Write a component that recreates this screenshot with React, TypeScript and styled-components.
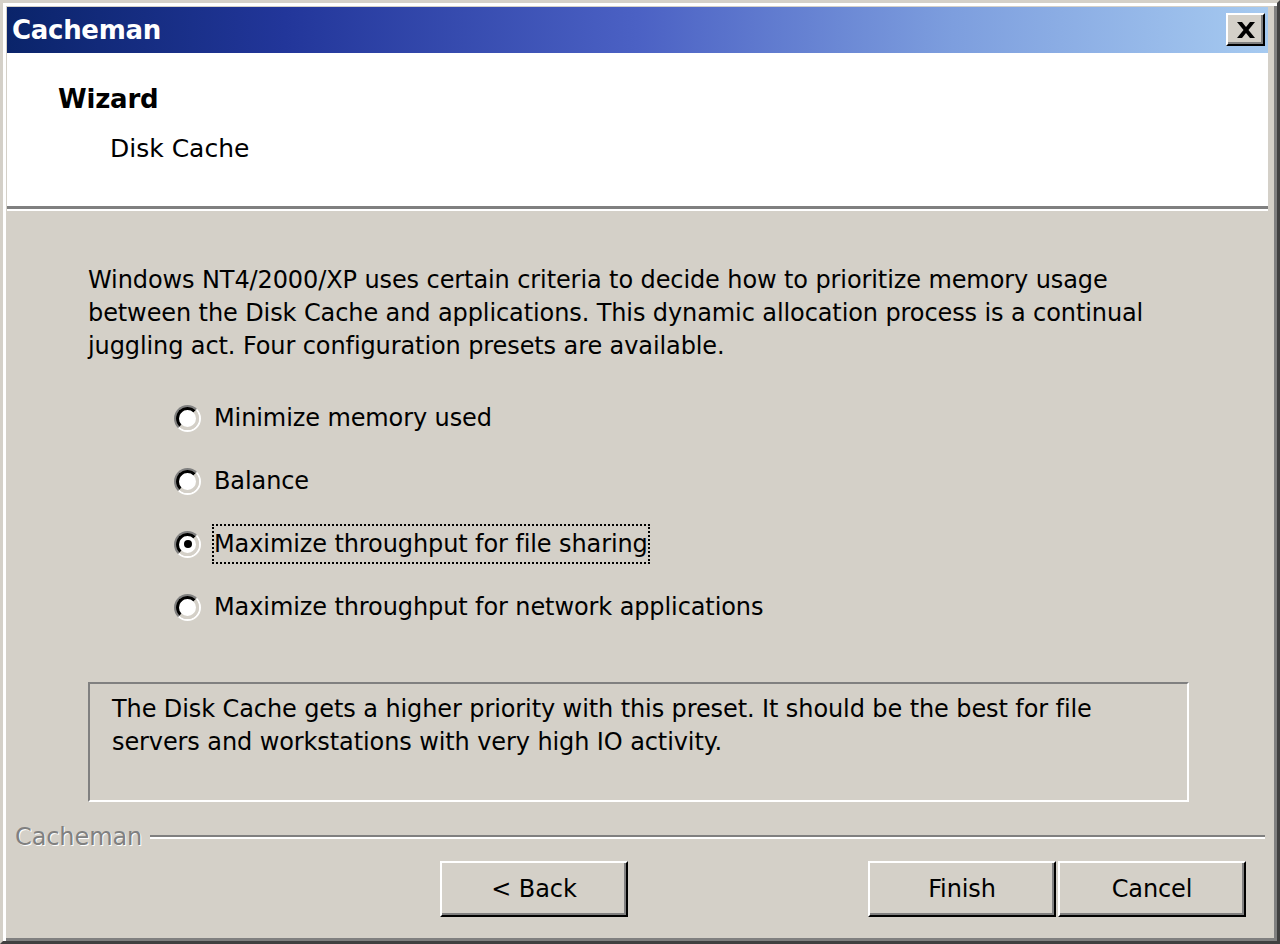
import React from "react";
import styled, { createGlobalStyle } from "styled-components";

const Global = createGlobalStyle`
  html, body { margin: 0; padding: 0; background: #d4d0c8; }
  body { font-family: "DejaVu Sans", "Liberation Sans", sans-serif; color: #000; }
  #root { width: 1280px; height: 944px; overflow: hidden; }
`;

const Window = styled.div`
  box-sizing: border-box;
  width: 1280px;
  height: 944px;
  background: #d4d0c8;
  border: 3px solid;
  border-color: #d4d0c8 #404040 #404040 #d4d0c8;
  box-shadow: inset 3px 3px 0 #ffffff, inset -3px -3px 0 #808080;
  padding: 4px 9px 4px 4px;
  display: flex;
  flex-direction: column;
`;

const TitleBar = styled.div`
  height: 46px;
  flex: none;
  background: linear-gradient(
    to right,
    #0a246a 0%,
    #22369a 22%,
    #4b61c4 50%,
    #7d9ede 75%,
    #a6caf0 100%
  );
  display: flex;
  align-items: center;
  justify-content: space-between;
  padding: 0 3px 0 5px;
`;

const TitleText = styled.span`
  color: #fff;
  font-weight: bold;
  font-size: 26px;
  letter-spacing: -0.3px;
`;

const CloseButton = styled.div`
  box-sizing: border-box;
  width: 39px;
  height: 33px;
  background: #d4d0c8;
  border: 2px solid;
  border-color: #ffffff #000000 #000000 #ffffff;
  box-shadow: inset -2px -2px 0 #808080;
  display: flex;
  align-items: center;
  justify-content: center;
  margin-top: -1px;
`;

const Header = styled.div`
  height: 153px;
  flex: none;
  background: #fff;
  box-sizing: border-box;
  padding: 31px 0 0 51px;
`;

const HeaderTitle = styled.div`
  font-weight: bold;
  font-size: 26px;
  line-height: 30px;
  letter-spacing: -0.2px;
`;

const HeaderSub = styled.div`
  font-size: 25px;
  line-height: 30px;
  margin: 20px 0 0 52px;
`;

const Separator = styled.div`
  height: 3px;
  flex: none;
  background: #808080;
  border-bottom: 2px solid #ffffff;
`;

const Body = styled.div`
  flex: 1;
  display: flex;
  flex-direction: column;
  letter-spacing: -0.1px;
`;

const Paragraph = styled.p`
  margin: 53px 0 0 81px;
  font-size: 24px;
  line-height: 33px;
  white-space: nowrap;
`;

const RadioList = styled.div`
  margin: 35px 0 0 167px;
  display: flex;
  flex-direction: column;
  gap: 23px;
`;

const RadioRow = styled.div`
  height: 40px;
  display: flex;
  align-items: center;
  gap: 11px;
`;

const RadioOuter = styled.span`
  box-sizing: border-box;
  width: 27px;
  height: 27px;
  border-radius: 50%;
  border: 2px solid;
  border-color: #808080 #ffffff #ffffff #808080;
  display: flex;
  align-items: center;
  justify-content: center;
  flex: none;
`;

const RadioInner = styled.span`
  box-sizing: border-box;
  width: 23px;
  height: 23px;
  border-radius: 50%;
  border: 3px solid;
  border-color: #000000 #d4d0c8 #d4d0c8 #000000;
  background: #fff;
  display: flex;
  align-items: center;
  justify-content: center;
`;

const Dot = styled.span`
  width: 8px;
  height: 8px;
  border-radius: 50%;
  background: #000;
`;

const RadioLabel = styled.span<{ $focused?: boolean }>`
  box-sizing: border-box;
  height: 40px;
  display: flex;
  align-items: center;
  padding: 0;
  font-size: 24px;
  border: 2px ${(p) => (p.$focused ? "dotted #000" : "solid transparent")};
  white-space: nowrap;
`;

const InfoBox = styled.div`
  box-sizing: border-box;
  margin: 55px 0 0 81px;
  width: 1101px;
  height: 120px;
  border: 2px solid;
  border-color: #808080 #ffffff #ffffff #808080;
  padding: 9px 22px;
  font-size: 24px;
  line-height: 33px;
  white-space: nowrap;
`;

const FooterRow = styled.div`
  margin-top: 23px;
  height: 24px;
  display: flex;
  align-items: center;
  gap: 8px;
  padding: 0 3px 0 8px;
`;

const FooterLabel = styled.span`
  font-size: 24px;
  color: #808080;
  text-shadow: 1px 1px 0 #ffffff;
  white-space: nowrap;
`;

const EtchedLine = styled.div`
  flex: 1;
  height: 2px;
  background: #808080;
  border-bottom: 2px solid #ffffff;
`;

const ButtonRow = styled.div`
  margin-top: 12px;
  display: flex;
  justify-content: flex-end;
  padding-right: 22px;
`;

const Button = styled.div<{ $gapAfter?: number }>`
  box-sizing: border-box;
  width: 188px;
  height: 56px;
  background: #d4d0c8;
  border: 2px solid;
  border-color: #ffffff #000000 #000000 #ffffff;
  box-shadow: inset -2px -2px 0 #808080;
  display: flex;
  align-items: center;
  justify-content: center;
  font-size: 24px;
  margin-right: ${(p) => p.$gapAfter ?? 0}px;
`;

const CloseIcon = () => (
  <svg width="22" height="18" viewBox="0 0 22 18">
    <path
      d="M2 1 L7 1 L11 6 L15 1 L20 1 L13.5 9 L20 17 L15 17 L11 12 L7 17 L2 17 L8.5 9 Z"
      fill="#000"
    />
  </svg>
);

const options = [
  "Minimize memory used",
  "Balance",
  "Maximize throughput for file sharing",
  "Maximize throughput for network applications",
];

export default function App() {
  const selected = 2;
  return (
    <>
      <Global />
      <Window>
        <TitleBar>
          <TitleText>Cacheman</TitleText>
          <CloseButton>
            <CloseIcon />
          </CloseButton>
        </TitleBar>
        <Header>
          <HeaderTitle>Wizard</HeaderTitle>
          <HeaderSub>Disk Cache</HeaderSub>
        </Header>
        <Separator />
        <Body>
          <Paragraph>
            Windows NT4/2000/XP uses certain criteria to decide how to prioritize memory usage
            <br />
            between the Disk Cache and applications. This dynamic allocation process is a continual
            <br />
            juggling act. Four configuration presets are available.
          </Paragraph>
          <RadioList>
            {options.map((o, i) => (
              <RadioRow key={o}>
                <RadioOuter>
                  <RadioInner>{i === selected && <Dot />}</RadioInner>
                </RadioOuter>
                <RadioLabel $focused={i === selected}>{o}</RadioLabel>
              </RadioRow>
            ))}
          </RadioList>
          <InfoBox>
            The Disk Cache gets a higher priority with this preset. It should be the best for file
            <br />
            servers and workstations with very high IO activity.
          </InfoBox>
          <FooterRow>
            <FooterLabel>Cacheman</FooterLabel>
            <EtchedLine />
          </FooterRow>
          <ButtonRow>
            <Button $gapAfter={240}>&lt; Back</Button>
            <Button $gapAfter={2}>Finish</Button>
            <Button>Cancel</Button>
          </ButtonRow>
        </Body>
      </Window>
    </>
  );
}
